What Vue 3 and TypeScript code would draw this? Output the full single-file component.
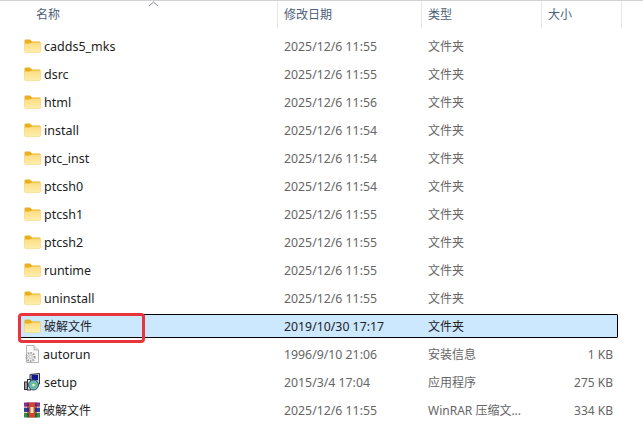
<script setup lang="ts">
interface FileRow {
  name: string
  date: string
  type: string
  size?: string
  icon: 'folder' | 'config' | 'setup' | 'rar'
  selected?: boolean
}

const headers = [
  { label: '名称', cls: 'col-name' },
  { label: '修改日期', cls: 'col-date' },
  { label: '类型', cls: 'col-type' },
  { label: '大小', cls: 'col-size' },
]

const folders: [string, string][] = [
  ['cadds5_mks', '2025/12/6 11:55'],
  ['dsrc', '2025/12/6 11:55'],
  ['html', '2025/12/6 11:56'],
  ['install', '2025/12/6 11:54'],
  ['ptc_inst', '2025/12/6 11:54'],
  ['ptcsh0', '2025/12/6 11:54'],
  ['ptcsh1', '2025/12/6 11:55'],
  ['ptcsh2', '2025/12/6 11:55'],
  ['runtime', '2025/12/6 11:55'],
  ['uninstall', '2025/12/6 11:55'],
]

const rows: FileRow[] = [
  ...folders.map(([name, date]): FileRow => ({ name, date, type: '文件夹', icon: 'folder' })),
  { name: '破解文件', date: '2019/10/30 17:17', type: '文件夹', icon: 'folder', selected: true },
  { name: 'autorun', date: '1996/9/10 21:06', type: '安装信息', size: '1 KB', icon: 'config' },
  { name: 'setup', date: '2015/3/4 17:04', type: '应用程序', size: '275 KB', icon: 'setup' },
  { name: '破解文件', date: '2025/12/6 11:55', type: 'WinRAR 压缩文...', size: '334 KB', icon: 'rar' },
]

const isCjk = (s: string) => /[^\x00-\x7f]/.test(s)
</script>

<template>
  <div class="explorer">
    <svg class="defs" width="0" height="0">
      <defs>
        <linearGradient id="folder-front" x1="0" y1="0" x2="0" y2="1">
          <stop offset="0" stop-color="#fcdc7c" />
          <stop offset="1" stop-color="#ffeeb0" />
        </linearGradient>
      </defs>
    </svg>
    <div class="header">
      <div v-for="h in headers" :key="h.label" class="head-cell" :class="h.cls">{{ h.label }}</div>
      <svg class="sort" width="11" height="6" viewBox="0 0 11 6">
        <path d="M1 5 L5.5 1 L10 5" fill="none" stroke="#8a8f96" stroke-width="1" />
      </svg>
    </div>
    <div class="rows">
      <div v-for="(row, i) in rows" :key="i" class="row" :class="{ selected: row.selected }">
        <div class="name">
          <svg v-if="row.icon === 'folder'" class="icon" width="17" height="16" viewBox="0 0 17 16">
            <path d="M0.5 2.5 Q0.5 1.5 1.5 1.5 H6 L8 3.5 H15.5 Q16.5 3.5 16.5 4.5 V13.5 Q16.5 14.5 15.5 14.5 H1.5 Q0.5 14.5 0.5 13.5 Z" fill="#e9b01f" />
            <path d="M0.5 5.5 H6 L8 4.5 H16.5 V13.5 Q16.5 14.5 15.5 14.5 H1.5 Q0.5 14.5 0.5 13.5 Z" fill="url(#folder-front)" />
          </svg>
          <svg v-else-if="row.icon === 'config'" class="icon" width="16" height="18" viewBox="0 0 16 18">
            <path d="M2.5 0.5 H10 L14.5 5 V17.5 H2.5 Z" fill="#fbfbfb" stroke="#b5b5b5" />
            <path d="M10 0.5 V5 H14.5" fill="#e8e8e8" stroke="#b5b5b5" />
            <circle cx="6.5" cy="12" r="4" fill="none" stroke="#a3a3a3" stroke-width="2.2" stroke-dasharray="1.6 1" />
            <circle cx="6.5" cy="12" r="2.4" fill="#cfcfcf" />
            <circle cx="6.5" cy="12" r="1" fill="#fbfbfb" />
          </svg>
          <svg v-else-if="row.icon === 'setup'" class="icon" width="17" height="18" viewBox="0 0 17 18">
            <path d="M6 1.5 L15.5 0.5 V11 L13 13 H6 Z" fill="#c9ccd6" stroke="#30343c" />
            <rect x="7.5" y="1.8" width="6.5" height="5.5" fill="#14148c" />
            <rect x="3.5" y="6.5" width="3" height="10.5" fill="#e8e8e8" stroke="#30343c" />
            <rect x="0.5" y="9" width="3" height="7.5" fill="#9a9a9a" stroke="#30343c" />
            <circle cx="9.5" cy="12" r="5" fill="#67b8c4" stroke="#3a4f52" />
            <path d="M7.5 9.5 L12.5 11 L9 15.5 Z" fill="#6cc24a" />
            <circle cx="9.5" cy="12" r="1.2" fill="#fff" />
          </svg>
          <svg v-else class="icon" width="16" height="16" viewBox="0 0 16 16">
            <rect x="0" y="0.5" width="16" height="5" fill="#8a2f92" />
            <rect x="0" y="5.5" width="16" height="5" fill="#2d3fa5" />
            <rect x="0" y="10.5" width="16" height="5" fill="#2f8f3f" />
            <rect x="0" y="4.6" width="16" height="1" fill="#f0d8b0" />
            <rect x="0" y="10" width="16" height="1" fill="#f0d8b0" />
            <rect x="5" y="0.5" width="6" height="15" fill="#d8432f" />
            <rect x="6.5" y="5" width="3" height="6" fill="#f6e7b8" />
            <rect x="3.5" y="0.5" width="1" height="15" fill="#2c2440" />
            <rect x="11.5" y="0.5" width="1" height="15" fill="#2c2440" />
          </svg>
          <span class="name-text" :class="{ cjk: isCjk(row.name) }">{{ row.name }}</span>
        </div>
        <div class="date">{{ row.date }}</div>
        <div class="type">{{ row.type }}</div>
        <div class="size">{{ row.size }}</div>
      </div>
    </div>
    <div class="callout"></div>
  </div>
</template>

<style scoped>
.explorer {
  position: relative;
  width: 643px;
  height: 432px;
  overflow: hidden;
  background: #fff;
  border-top: 1px solid #d2d2d2;
  box-sizing: border-box;
  font-family: "Noto Sans", "Noto Sans CJK SC", sans-serif;
  font-size: 12px;
  color: #666;
}

.defs {
  position: absolute;
}

.header {
  display: flex;
  height: 27px;
  color: #4c607a;
}

.head-cell {
  box-sizing: border-box;
  display: flex;
  align-items: center;
  border-right: 1px solid #e5e5e5;
  padding-left: 6px;
  padding-bottom: 2px;
}

.col-name {
  width: 278px;
  padding-left: 36px;
}

.col-date {
  width: 144px;
}

.col-type {
  width: 120px;
}

.col-size {
  width: 80px;
}

.sort {
  position: absolute;
  left: 148px;
  top: 0;
}

.rows {
  display: flex;
  flex-direction: column;
  gap: 4px;
  margin: 6px 0 0 20px;
  width: 598px;
}

.row {
  box-sizing: border-box;
  display: grid;
  grid-template-columns: 260px 144px 1fr 72px;
  align-items: center;
  height: 24px;
  padding: 0 4px;
  border: 1px solid transparent;
}

.row.selected {
  background: #cce8ff;
  border-color: #000;
  border-radius: 1px;
  color: #222;
}

.name {
  display: flex;
  align-items: center;
  gap: 3px;
  margin-left: -1px;
  color: #222;
  font-size: 12.5px;
}

.name-text.cjk {
  font-size: 12px;
}

.icon {
  flex: none;
}

.date {
  margin-left: -1px;
  font-size: 12.3px;
}

.type {
  margin-left: -1px;
}

.size {
  text-align: right;
}

.callout {
  position: absolute;
  left: 18px;
  top: 312px;
  width: 127px;
  height: 30px;
  box-sizing: border-box;
  border: 3px solid #e8353c;
  border-radius: 4px;
}
</style>

<style>
html,
body {
  background: #fff;
}
</style>
